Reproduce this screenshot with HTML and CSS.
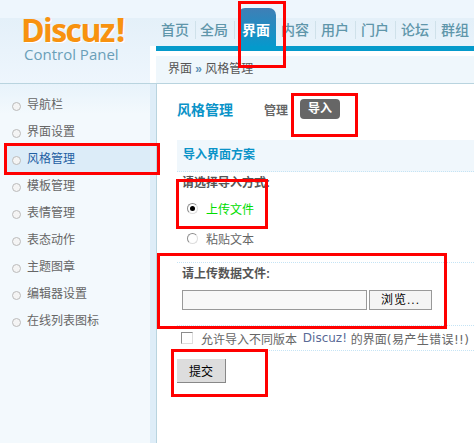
FILE: index.html
```html
<!DOCTYPE html>
<html lang="zh">
<head>
<meta charset="utf-8">
<title>Discuz! Control Panel</title>
<link rel="stylesheet" href="styles.css">
</head>
<body>
<div class="page">
  <header class="header">
    <div class="logo">
      <div class="logo-main">Discuz<span class="logo-bang">!</span></div>
      <div class="logo-sub">Control Panel</div>
    </div>
    <div class="header-right">
      <nav class="nav">
        <a class="nav-item">首页</a>
        <a class="nav-item">全局</a>
        <a class="nav-item active">界面</a>
        <a class="nav-item">内容</a>
        <a class="nav-item">用户</a>
        <a class="nav-item">门户</a>
        <a class="nav-item">论坛</a>
        <a class="nav-item">群组</a>
      </nav>
      <div class="crumb-wrap">
        <div class="crumb">界面 <span class="crumb-sep">»</span> 风格管理</div>
      </div>
    </div>
  </header>
  <div class="main">
    <aside class="sidebar">
      <ul class="menu">
        <li class="menu-item">导航栏</li>
        <li class="menu-item">界面设置</li>
        <li class="menu-item current">风格管理</li>
        <li class="menu-item">模板管理</li>
        <li class="menu-item">表情管理</li>
        <li class="menu-item">表态动作</li>
        <li class="menu-item">主题图章</li>
        <li class="menu-item">编辑器设置</li>
        <li class="menu-item">在线列表图标</li>
      </ul>
    </aside>
    <main class="content">
      <div class="title-row">
        <h1 class="title">风格管理</h1>
        <span class="tab">管理</span>
        <span class="tab tab-on">导入</span>
      </div>
      <h2 class="section">导入界面方案</h2>
      <div class="label first">请选择导入方式:</div>
      <label class="choice green"><span class="radio on"></span>上传文件</label>
      <label class="choice second"><span class="radio"></span>粘贴文本</label>
      <div class="upload">
        <div class="label up">请上传数据文件:</div>
        <div class="file">
          <span class="file-box"></span>
          <span class="file-btn">浏览...</span>
        </div>
      </div>
      <label class="allow"><span class="check"></span>允许导入不同版本 <span class="latin">Discuz!</span> 的界面<span class="tail">(易产生错误!!)</span></label>
      <button class="submit" type="button">提交</button>
    </main>
  </div>
  <i class="mark m1"></i>
  <i class="mark m2"></i>
  <i class="mark m3"></i>
  <i class="mark m4"></i>
  <i class="mark m5"></i>
  <i class="mark m6"></i>
</div>
</body>
</html>
```
FILE: styles.css
```css
* { box-sizing: border-box; }
html, body { margin: 0; padding: 0; background: #fff; }
.page {
  position: relative;
  width: 474px;
  height: 443px;
  overflow: hidden;
  font: 12px "Liberation Sans", "Noto Sans CJK SC", sans-serif;
  color: #666;
}
.header {
  display: flex;
  height: 84px;
  border-bottom: 1px solid #b9d4df;
  background: linear-gradient(#eef6fd 0, #eef6fd 18px, #e4f0f9 18px, #eef6fd 84px);
}
.logo { width: 150px; flex: none; padding: 15px 0 0 21px; }
.logo-main {
  height: 28px;
  font: bold 32px/28px "Open Sans", "Liberation Sans", sans-serif;
  letter-spacing: -1.6px;
  color: #f8920f;
  text-shadow: 1px 1px 0 #fff;
}
.logo-bang { font-size: 34px; line-height: 28px; margin-left: 2px; }
.logo-sub {
  margin: 3px 0 0 3px;
  font: 15px/16px "Open Sans", "Liberation Sans", sans-serif;
  color: #6a9fb8;
}
.header-right { flex: 1; min-width: 0; background: linear-gradient(90deg, #fff 0, #fff 6px, transparent 6px); background-size: 100% 38px; background-position: 0 46px; background-repeat: no-repeat; }
.nav {
  display: flex;
  height: 46px;
  padding: 8px 0 0 6px;
  white-space: nowrap;
}
.nav-item {
  flex: none;
  width: 40px;
  height: 38px;
  padding-top: 13px;
  padding-left: 5px;
  font-size: 14px;
  line-height: 18px;
  font-weight: 500;
  color: #5f96aa;
  position: relative;
}
.nav-item:not(.active)::after {
  content: "";
  position: absolute;
  right: 0;
  top: 13px;
  height: 18px;
  width: 1px;
  background: #cfe1ea;
}
.nav-item.active {
  width: 38px;
  margin: 0 0 0 3px;
  padding-left: 4px;
  border-radius: 7px 7px 0 0;
  background: linear-gradient(#3f7fb6, #0798cc);
  color: #fff;
  font-weight: 700;
}
.nav-item:nth-child(2) { margin-left: -1px; }
.crumb-wrap {
  height: 37px;
  margin-left: 6px;
  border-top: 5px solid #049acb;
  background: linear-gradient(#fff 0, #fff 5px, #eff7fc 5px);
}
.crumb { padding: 10px 0 0 12px; line-height: 17px; color: #555; }
.crumb-sep { color: #5b8fb5; font-weight: 700; }
.main { display: flex; height: 359px; }
.sidebar {
  width: 157px;
  flex: none;
  border-right: 1px solid #b9d4df;
  background: linear-gradient(90deg, transparent 150px, #deedf8 150px), linear-gradient(#e8f3fb, #f3f9fd 30px);
}
.menu { list-style: none; margin: 0; padding: 8px 6px 0 7px; }
.menu-item {
  position: relative;
  height: 27px;
  line-height: 26px;
  padding-left: 20px;
}
.menu-item::before {
  content: "";
  position: absolute;
  left: 5px;
  top: 10px;
  width: 7px;
  height: 7px;
  border: 1px solid #bbb;
  border-radius: 50%;
  background: #f4f4f4;
}
.menu-item.current { background: #dcecf8; color: #1f5fa3; }
.content { flex: 1; min-width: 0; padding: 0 0 0 20px; white-space: nowrap; }
.title-row { display: flex; align-items: center; height: 56px; padding-bottom: 6px; }
.title { margin: 0; width: 87px; font-size: 14px; font-weight: 700; color: #0a93c8; }
.tab { font-weight: 700; color: #666; }
.tab-on {
  margin-left: 12px;
  width: 40px;
  height: 20px;
  line-height: 20px;
  text-align: center;
  border-radius: 4px;
  background: #666;
  color: #fff;
}
.section {
  margin: 0;
  height: 32px;
  line-height: 30px;
  padding-left: 6px;
  font-size: 12px;
  font-weight: 700;
  color: #0a93c8;
  background: #f0f7fc;
  border-bottom: 1px dotted #c5e4f5;
}
.label { font-weight: 700; color: #555; padding-left: 5px; line-height: 16px; }
.label.first { margin-top: 3px; }
.choice { display: flex; align-items: center; height: 16px; margin: 9px 0 0 10px; color: #666; }
.choice.green { color: #00dd00; }
.choice.second { margin-top: 14px; }
.radio {
  width: 11px;
  height: 11px;
  margin-right: 8px;
  border: 1px solid #8d8d8d;
  border-right-color: #ddd;
  border-bottom-color: #ddd;
  border-radius: 50%;
  background: #fff;
  display: flex;
  align-items: center;
  justify-content: center;
}
.radio.on::after { content: ""; width: 5px; height: 5px; border-radius: 50%; background: #000; }
.upload {
  height: 64px;
  margin-top: 16px;
  padding: 3px 0 0 5px;
  border-top: 1px dotted #c5e4f5;
  border-bottom: 1px dotted #c5e4f5;
}
.label.up { padding-left: 0; margin-top: 0; }
.file { display: flex; gap: 2px; margin-top: 8px; }
.file-box { width: 185px; height: 20px; border: 1px solid #999; background: #f8f8f8; }
.file-btn {
  width: 63px;
  height: 20px;
  border: 1px solid #999;
  background: #f4f4f4;
  color: #000;
  text-align: center;
  line-height: 18px;
  letter-spacing: 1px;
}
.allow {
  display: flex;
  align-items: center;
  height: 25px;
  padding-left: 4px;
  border-bottom: 1px dotted #c5e4f5;
  font-family: "DejaVu Sans", "Noto Sans CJK SC", sans-serif;
  white-space: pre;
}
.check {
  width: 12px;
  height: 12px;
  margin-right: 8px;
  border: 1px solid #8d8d8d;
  border-right-color: #ddd;
  border-bottom-color: #ddd;
  background: #fff;
}
.latin { margin-left: 2px; color: #5a6a96; }
.tail { letter-spacing: .4px; }
.submit {
  display: block;
  width: 49px;
  height: 24px;
  margin-top: 8px;
  padding: 0;
  border: 0;
  border-right: 1px solid #888;
  border-bottom: 1px solid #888;
  background: #ddd;
  color: #000;
  font: 12px "Liberation Sans", "Noto Sans CJK SC", sans-serif;
}
.mark { position: absolute; border: 3px solid #f00; }
.m1 { left: 238px; top: 1px; width: 48px; height: 67px; }
.m2 { left: 291px; top: 93px; width: 67px; height: 44px; }
.m3 { left: 4px; top: 143px; width: 156px; height: 32px; }
.m4 { left: 176px; top: 179px; width: 92px; height: 50px; }
.m5 { left: 157px; top: 253px; width: 290px; height: 76px; }
.m6 { left: 171px; top: 349px; width: 97px; height: 48px; }
```
